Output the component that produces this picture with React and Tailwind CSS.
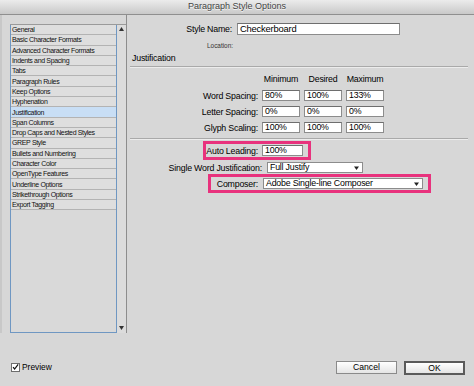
import { useState } from 'react'

const SECTIONS = [
  'General',
  'Basic Character Formats',
  'Advanced Character Formats',
  'Indents and Spacing',
  'Tabs',
  'Paragraph Rules',
  'Keep Options',
  'Hyphenation',
  'Justification',
  'Span Columns',
  'Drop Caps and Nested Styles',
  'GREP Style',
  'Bullets and Numbering',
  'Character Color',
  'OpenType Features',
  'Underline Options',
  'Strikethrough Options',
  'Export Tagging',
]

const SPACING = [
  { label: 'Word Spacing:', values: ['80%', '100%', '133%'] },
  { label: 'Letter Spacing:', values: ['0%', '0%', '0%'] },
  { label: 'Glyph Scaling:', values: ['100%', '100%', '100%'] },
]

function Field({ value, className }) {
  return (
    <div className={`h-[11px] bg-white border border-[#8c8c8c] border-t-[#6e6e6e] pl-[2px] text-[8.8px] leading-[9px] tracking-[-0.2px] text-black ${className}`}>
      {value}
    </div>
  )
}

function Select({ value, className }) {
  return (
    <div className={`h-[11px] bg-white border border-[#8c8c8c] flex items-center pl-[2px] pr-[3px] text-[8.8px] leading-[9px] tracking-[-0.2px] text-black ${className}`}>
      <span className="flex-1">{value}</span>
      <svg width="5" height="4" viewBox="0 0 5 4"><path d="M0 0.5h5L2.5 4z" fill="#222" /></svg>
    </div>
  )
}

function Etched() {
  return <div className="h-[2px] border-t border-[#a9a9a9] border-b border-b-[#ececec]" />
}

export default function App() {
  const [selected, setSelected] = useState('Justification')
  const [preview, setPreview] = useState(true)

  return (
    <div className="w-[474px] h-[386px] bg-[#d7d7d7] flex flex-col overflow-hidden text-black" style={{ fontFamily: '"Liberation Sans", Arial, sans-serif' }}>
      <div className="h-[15px] shrink-0 bg-gradient-to-b from-[#ececec] to-[#c9c9c9] border-b border-[#8f8f8f] flex items-center justify-center text-[9px] text-[#444] [text-shadow:0_1px_0_#f4f4f4]">
        Paragraph Style Options
      </div>

      <div className="flex h-[318px]">
        <div className="w-[127px] shrink-0 pl-[8px] pt-[9px] border-r border-[#8d8d8d] border-l-[2px] border-l-[#c8c8c8]">
          <div className="flex h-[309px] border-t border-[#9a9a9a]">
            <div className="w-[107px] border-l border-b border-r border-[#6f97c2] bg-[#d9d9d9]">
              {SECTIONS.map(s => (
                <div
                  key={s}
                  onClick={() => setSelected(s)}
                  className={`h-[10.3px] flex items-center pl-[1px] border-b border-[#b3b3b3] text-[7px] leading-[9px] tracking-[-0.35px] text-[#111] ${s === selected ? 'bg-[#c8def5]' : 'bg-[#dedede]'}`}
                >
                  {s}
                </div>
              ))}
            </div>
            <div className="flex-1 bg-[#dcdcdc] flex flex-col justify-between items-center pt-[2px] pb-[3px]">
              <svg width="5" height="4" viewBox="0 0 5 4"><path d="M0 4h5L2.5 0z" fill="#333" /></svg>
              <svg width="5" height="4" viewBox="0 0 5 4"><path d="M0 0h5L2.5 4z" fill="#333" /></svg>
            </div>
          </div>
        </div>

        <div className="flex-1 pl-[3px] pr-[6px] pt-[8px] text-[8.8px] leading-[10px] tracking-[-0.2px]">
          <div className="flex items-center h-[12px]">
            <div className="w-[102px] text-right">Style Name:</div>
            <div className="ml-[5px] w-[163px] h-[12px] bg-white border border-[#8c8c8c] border-t-[#6e6e6e] pl-[2px] text-[9.4px] leading-[10px]">Checkerboard</div>
          </div>
          <div className="flex items-center h-[8px] mt-[7px]">
            <div className="w-[103px] text-right text-[6.4px] tracking-normal text-[#333]">Location:</div>
          </div>
          <div className="h-[10px] mt-[3px] pl-[2px] flex items-center text-[8.8px]">Justification</div>
          <div className="mt-[3px]"><Etched /></div>

          <div className="flex h-[10px] mt-[6px] items-center">
            <div className="w-[132px]" />
            <div className="flex gap-[4px]">
              <div className="w-[38px] text-center">Minimum</div>
              <div className="w-[38px] text-center">Desired</div>
              <div className="w-[38px] text-center">Maximum</div>
            </div>
          </div>

          <div className="flex flex-col gap-[5px] mt-[6px]">
            {SPACING.map(row => (
              <div key={row.label} className="flex items-center h-[11px]">
                <div className="w-[128px] text-right">{row.label}</div>
                <div className="ml-[4px] flex gap-[4px]">
                  {row.values.map((v, i) => <Field key={i} value={v} className="w-[38px]" />)}
                </div>
              </div>
            ))}
          </div>

          <div className="mt-[5px]"><Etched /></div>

          <div className="flex mt-[1px] pl-[73px]">
            <div className="flex items-center border-[3px] border-[#e8327d] py-[1px] pr-[5px]">
              <div className="w-[52px] text-right">Auto Leading:</div>
              <Field value="100%" className="ml-[4px] w-[41px]" />
            </div>
          </div>

          <div className="flex items-center h-[11px] mt-[2px]">
            <div className="w-[132px] text-right">Single Word Justification:</div>
            <Select value="Full Justify" className="ml-[5px] w-[96px]" />
          </div>

          <div className="flex pl-[78px] mt-[1px]">
            <div className="flex items-center border-[3px] border-[#e8327d] py-[1px] pr-[5px]">
              <div className="w-[47px] text-right">Composer:</div>
              <Select value="Adobe Single-line Composer" className="ml-[5px] w-[160px]" />
            </div>
          </div>
        </div>
      </div>

      <div className="flex items-center mt-[27px] h-[15px] pl-[11px] pr-[9px]">
        <label className="flex items-center gap-[2px] text-[8.4px] cursor-pointer" onClick={() => setPreview(!preview)}>
          <span className="w-[9px] h-[9px] bg-white border border-[#6d6d6d] flex items-center justify-center">
            {preview && (
              <svg width="8" height="8" viewBox="0 0 8 8"><path d="M1.2 4.2 3 6.3 7 1" fill="none" stroke="#111" strokeWidth="1.4" /></svg>
            )}
          </span>
          Preview
        </label>
        <div className="flex-1" />
        <button className="w-[61px] h-[13px] bg-gradient-to-b from-white to-[#e4e4e4] border border-[#8a8a8a] text-[8.6px] leading-[11px] text-center">Cancel</button>
        <button className="ml-[7px] w-[61px] h-[14px] bg-gradient-to-b from-white to-[#e4e4e4] border-2 border-[#5a5a5a] text-[8.6px] leading-[10px] text-center">OK</button>
      </div>
    </div>
  )
}
